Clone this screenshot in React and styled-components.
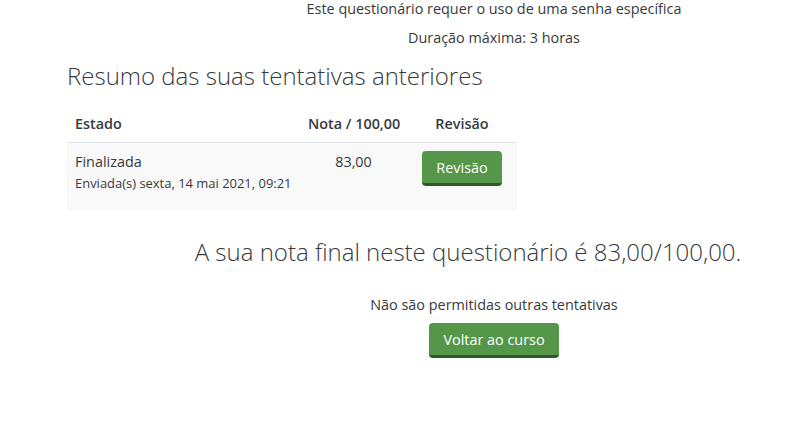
import React from "react";
import styled, { createGlobalStyle } from "styled-components";

const Global = createGlobalStyle`
  html, body { margin: 0; padding: 0; background: #fff; overflow: hidden; }
  body { font-family: "Open Sans", "Liberation Sans", sans-serif; color: #373a3c; font-size: 14.4px; }
`;

const Main = styled.div`
  width: 854px;
  margin-left: 67px;
  margin-top: -2px;
`;

const Info = styled.p`
  margin: 0 0 8px;
  text-align: center;
  line-height: 21px;
  font-size: 14.4px;
`;

const Heading = styled.h3`
  margin: 14px 0 14px;
  font-weight: 300;
  font-size: 24px;
  line-height: 1.2;
`;

const Table = styled.table`
  width: 450px;
  table-layout: fixed;
  border-collapse: collapse;
  font-size: 14.4px;
`;

const Th = styled.th`
  font-weight: 600;
  text-align: ${(p) => p.$align || "left"};
  padding: 8px;
  line-height: 21px;
  white-space: nowrap;
  border-bottom: 1px solid #dee2e6;
  width: ${(p) => p.$w || "auto"};
`;

const Row = styled.tr`
  background: #f9f9f9;
`;

const Td = styled.td`
  vertical-align: top;
  text-align: ${(p) => p.$align || "left"};
  padding: 8px 8px 16px;
  line-height: 21px;
  white-space: nowrap;
`;

const Sub = styled.div`
  font-size: 12.96px;
  margin-top: 1px;
`;

const Button = styled.button`
  font-family: "Open Sans", "Liberation Sans", sans-serif;
  font-size: 14.4px;
  color: #fff;
  background: #559749;
  border: 0;
  border-bottom: 3px solid #2f5a28;
  border-radius: 4px;
  padding: 6px 14px 5px;
  line-height: 21px;
  cursor: pointer;
`;

const Grade = styled.h3`
  margin: 28px 0 0;
  padding-right: 52px;
  text-align: center;
  font-weight: 300;
  font-size: 24px;
  line-height: 1.2;
`;

const Footer = styled.div`
  margin-top: 27px;
  display: flex;
  flex-direction: column;
  align-items: center;
`;

export default function App() {
  return (
    <>
      <Global />
      <Main>
        <Info>Este questionário requer o uso de uma senha específica</Info>
        <Info>Duração máxima: 3 horas</Info>
        <Heading>Resumo das suas tentativas anteriores</Heading>
        <Table>
          <thead>
            <tr>
              <Th $w="217px">Estado</Th>
              <Th $align="center" $w="91px">Nota / 100,00</Th>
              <Th $align="center">Revisão</Th>
            </tr>
          </thead>
          <tbody>
            <Row>
              <Td>
                Finalizada
                <Sub>Enviada(s) sexta, 14 mai 2021, 09:21</Sub>
              </Td>
              <Td $align="center">83,00</Td>
              <Td $align="center">
                <Button>Revisão</Button>
              </Td>
            </Row>
          </tbody>
        </Table>
        <Grade>A sua nota final neste questionário é 83,00/100,00.</Grade>
        <Footer>
          <Info as="div">Não são permitidas outras tentativas</Info>
          <Button>Voltar ao curso</Button>
        </Footer>
      </Main>
    </>
  );
}
